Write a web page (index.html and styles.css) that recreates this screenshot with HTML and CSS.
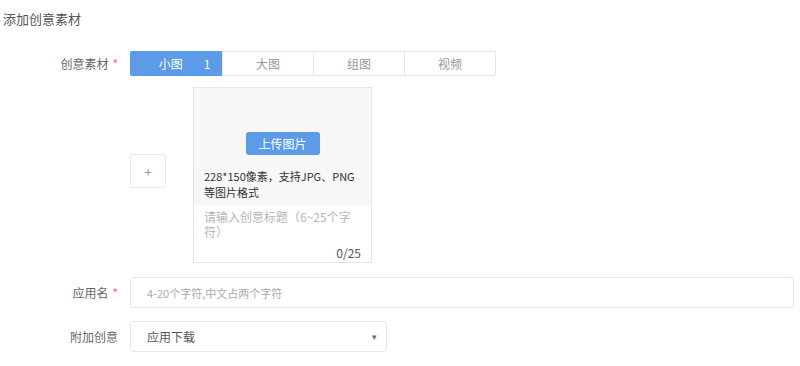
FILE: index.html
```html
<!DOCTYPE html>
<html lang="zh-CN">
<head>
    <meta charset="UTF-8">
    <title>添加创意素材</title>
    <link rel="stylesheet" href="styles.css">
</head>
<body>
    <div class="title">添加创意素材</div>

    <div class="form">
        <div class="form-row tabs-row">
            <div class="label">创意素材<span class="req">*</span></div>
            <div class="tabs">
                <div class="tab active">小图<span class="count">1</span></div>
                <div class="tab">大图</div>
                <div class="tab">组图</div>
                <div class="tab">视频</div>
            </div>
        </div>

        <div class="form-row upload-row">
            <div class="label"></div>
            <div class="add-box">+</div>
            <div class="card">
                <div class="card-top">
                    <div class="upload-btn">上传图片</div>
                    <div class="hint">228*150像素，支持JPG、PNG等图片格式</div>
                </div>
                <div class="card-bottom">
                    <div class="placeholder">请输入创意标题（6~25个字符）</div>
                    <div class="counter">0/25</div>
                </div>
            </div>
        </div>

        <div class="form-row name-row">
            <div class="label">应用名<span class="req">*</span></div>
            <input type="text" class="text-input" placeholder="4-20个字符,中文占两个字符">
        </div>

        <div class="form-row extra-row">
            <div class="label">附加创意</div>
            <div class="select">
                <span>应用下载</span>
                <span class="arrow">▾</span>
            </div>
        </div>
    </div>
</body>
</html>
```

FILE: styles.css
```css
body {
    margin: 0;
    font-family: "Noto Sans CJK SC", "Noto Sans", sans-serif;
    font-size: 12px;
    color: #555;
    background: #fff;
}

.title {
    font-size: 13px;
    color: #555;
    padding: 10px 0 0 3px;
    line-height: 18px;
    height: 23px;
}

.form {
    display: flex;
    flex-direction: column;
}

.form-row {
    display: flex;
    align-items: center;
}

.label {
    width: 118px;
    flex: none;
    text-align: right;
    color: #666;
    margin-right: 12px;
}

.req {
    color: #f56c6c;
    margin-left: 4px;
}

.tabs-row {
    margin-top: 18px;
}

.tabs {
    display: flex;
    border: 1px solid #e6e6e6;
    border-radius: 2px;
    height: 23px;
    width: 364px;
}

.tab {
    flex: 0 0 91px;
    box-sizing: border-box;
    display: flex;
    justify-content: center;
    align-items: center;
    color: #999;
    border-left: 1px solid #e6e6e6;
}

.tab:first-child {
    border-left: none;
}

.tab.active {
    background: #5b9be8;
    color: #fff;
    margin: -1px 0 -1px -1px;
    flex-basis: 92px;
    border-radius: 2px 0 0 2px;
    padding-left: 17px;
}

.count {
    margin-left: 21px;
}

.upload-row {
    margin-top: 11px;
}

.add-box {
    width: 34px;
    height: 32px;
    border: 1px solid #e8e8e8;
    border-radius: 3px;
    display: flex;
    justify-content: center;
    align-items: center;
    color: #999;
    font-size: 13px;
    margin-right: 27px;
    margin-top: -8px;
}

.card {
    width: 177px;
    border: 1px solid #e6e6e6;
    display: flex;
    flex-direction: column;
}

.card-top {
    background: #f7f7f7;
    padding: 44px 10px 4px;
    height: 69px;
}

.upload-btn {
    width: 74px;
    height: 23px;
    margin: 0 auto 13px;
    background: #5b9be8;
    color: #fff;
    border-radius: 3px;
    display: flex;
    justify-content: center;
    align-items: center;
}

.hint {
    font-size: 11px;
    line-height: 16px;
    color: #333;
}

.card-bottom {
    padding: 4px 10px 2px;
    height: 51px;
}

.placeholder {
    color: #b5b5b5;
    line-height: 15px;
    padding-right: 10px;
}

.counter {
    text-align: right;
    color: #555;
    margin-top: 6px;
    line-height: 16px;
}

.name-row {
    margin-top: 14px;
}

.text-input {
    width: 664px;
    height: 31px;
    box-sizing: border-box;
    border: 1px solid #e6e6e6;
    border-radius: 3px;
    padding: 0 16px;
    font-family: inherit;
    font-size: 11px;
    color: #555;
    outline: none;
}

.text-input::placeholder {
    color: #aaa;
}

.extra-row {
    margin-top: 13px;
}

.select {
    width: 257px;
    height: 31px;
    box-sizing: border-box;
    border: 1px solid #e6e6e6;
    border-radius: 3px;
    padding: 0 9px 0 16px;
    display: flex;
    justify-content: space-between;
    align-items: center;
    color: #555;
}

.arrow {
    font-size: 9px;
    color: #666;
}
```
